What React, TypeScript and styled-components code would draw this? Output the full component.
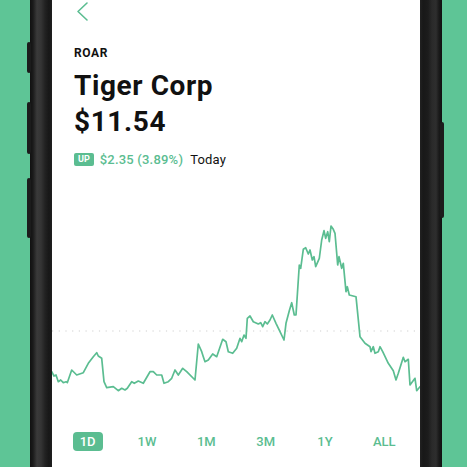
import React from "react";
import styled, { createGlobalStyle } from "styled-components";

const GREEN_BG = "#5ec596";
const GREEN = "#5bbd91";

const Global = createGlobalStyle`
  html, body { margin: 0; padding: 0; background: ${GREEN_BG}; }
  body { font-family: Roboto, "Liberation Sans", sans-serif; }
`;

const Page = styled.div`
  width: 467px;
  height: 467px;
  overflow: hidden;
  background: ${GREEN_BG};
  padding-left: 30px;
  box-sizing: border-box;
`;

const Phone = styled.div`
  position: relative;
  width: 412px;
  height: 467px;
  display: flex;
`;

const Bezel = styled.div<{ $side: "left" | "right" }>`
  width: 22px;
  flex: none;
  background: ${(p) =>
    p.$side === "left"
      ? "linear-gradient(to right, #111 0px, #1b1b1b 3px, #3a3a3a 7px, #343434 11px, #222 15px, #171717 19px, #202020 22px)"
      : "linear-gradient(to left, #111 0px, #1a1a1a 3px, #2e2e2e 6px, #2a2a2a 10px, #1c1c1c 14px, #181818 19px, #222 22px)"};
`;

const SideButton = styled.div<{ $side: "left" | "right"; $top: number; $h: number }>`
  position: absolute;
  ${(p) => (p.$side === "left" ? "left: -3px;" : "right: -2px;")}
  top: ${(p) => p.$top}px;
  height: ${(p) => p.$h}px;
  width: 4px;
  border-radius: 2px;
  background: #1c1c1c;
`;

const Screen = styled.div`
  flex: 1;
  background: #fff;
  display: flex;
  flex-direction: column;
  color: #111;
`;

const Content = styled.div`
  padding-left: 22px;
  display: flex;
  flex-direction: column;
  align-items: flex-start;
`;

const Back = styled.svg`
  display: block;
  margin-top: 1px;
`;

const Symbol = styled.div`
  margin-top: 23px;
  font-size: 12px;
  line-height: 16px;
  font-weight: 700;
  letter-spacing: 0.6px;
`;

const Title = styled.div`
  margin-top: 7px;
  font-size: 28px;
  line-height: 36px;
  font-weight: 700;
  letter-spacing: 0.6px;
`;

const ChangeRow = styled.div`
  margin-top: 13px;
  display: flex;
  align-items: center;
  height: 13px;
  font-size: 13px;
  line-height: 13px;
`;

const Badge = styled.span`
  background: ${GREEN};
  color: #fff;
  font-size: 9px;
  font-weight: 700;
  line-height: 13px;
  height: 13px;
  padding: 0 4px;
  border-radius: 2px;
  margin-right: 6px;
`;

const Change = styled.span`
  color: ${GREEN};
  font-weight: 500;
  letter-spacing: 0.2px;
  margin-right: 7px;
`;

const Period = styled.span`
  color: #111;
  letter-spacing: 0.2px;
`;

const Chart = styled.svg`
  display: block;
  margin-top: 34px;
`;

const TabBar = styled.div`
  margin-top: 32px;
  display: flex;
  padding: 0 6px;
`;

const Tab = styled.div`
  flex: 1;
  display: flex;
  justify-content: center;
`;

const TabLabel = styled.span<{ $active?: boolean }>`
  font-size: 13px;
  font-weight: 500;
  height: 19px;
  line-height: 19px;
  padding: 0 7px;
  border-radius: 4px;
  color: ${(p) => (p.$active ? "#fff" : GREEN)};
  background: ${(p) => (p.$active ? GREEN : "transparent")};
`;

const pts: [number, number][] = [
  [51.7, 371.7], [54, 376], [56, 375], [58.3, 381.7], [60.7, 380], [63.3, 382.7], [66, 381.7], [67.3, 382.7],
  [71.7, 370], [76.7, 375], [83.3, 372.7], [88.3, 363.3], [93.3, 356.7], [96.7, 352.7], [98.3, 356], [101.7, 358.3],
  [104, 381.7], [106.7, 387.7], [113.3, 386.7], [118.3, 390.7], [121.7, 388.3], [125, 390], [127.3, 388.3],
  [131.7, 381.7], [134.3, 383.3], [138.3, 381], [143.3, 383.3], [150, 371.7], [153.3, 371.7], [156.7, 375],
  [161.7, 375], [164, 383.3], [168.3, 381.7], [171.7, 378.3], [175, 370], [178.3, 375], [182.7, 368.3],
  [186.7, 371.7], [195, 380], [198.3, 344], [201.7, 351.7], [203.3, 356.7], [205, 361.7], [208.3, 360],
  [212.7, 354], [216.7, 356.7], [222.7, 339.3], [226, 341.7], [228.3, 351.7], [232.7, 353.3], [236.7, 348.3],
  [240, 338.3], [241.7, 341.7], [244, 335], [246, 338.3], [247.3, 318.3], [250, 316], [253.3, 321.7],
  [258.3, 324], [260.7, 322.7], [262.7, 326.7], [265, 321.7], [267.3, 324], [270, 320], [272.3, 315],
  [276, 323.3], [280, 331.7], [284, 340], [286, 323.3], [289.3, 310.7], [291.7, 302.7], [294.3, 315],
  [296, 315], [299.3, 265], [300.7, 268.3], [303.3, 249.3], [305.7, 247.7], [308.3, 254], [310, 250],
  [312.3, 260], [314, 256.7], [315.7, 266.7], [319.3, 258.3], [321.7, 240], [324, 230.7], [325.7, 238.3],
  [327.7, 231.7], [329.3, 241.7], [331, 226], [333.3, 229.3], [335, 233.3], [337.7, 265], [339, 256.7],
  [341.7, 268.3], [343.3, 263.3], [346, 291.7], [347.3, 286.7], [349.3, 295], [356, 296.7], [360, 336.7],
  [365, 343.3], [370, 346.7], [371, 351.7], [373.3, 346.7], [375, 353.3], [378.3, 351.7], [380, 346.7],
  [382.7, 351.7], [388.3, 363.3], [393.3, 370.7], [396, 380], [398.3, 373.3], [403.3, 357.3], [405, 361.7],
  [408.3, 359.3], [410, 385], [415, 378.3], [416.7, 390.7], [420, 386.7],
];

const linePath = "M" + pts.map(([x, y]) => `${x},${y}`).join(" L");

const tabs = ["1D", "1W", "1M", "3M", "1Y", "ALL"];

export default function App() {
  return (
    <Page>
      <Global />
      <Phone>
        <Bezel $side="left" />
        <Screen>
          <Content>
            <Back width="16" height="21" viewBox="0 0 16 21">
              <polyline points="13,2 4,10.5 13,19" fill="none" stroke={GREEN} strokeWidth="1.6" strokeLinecap="round" strokeLinejoin="round" />
            </Back>
            <Symbol>ROAR</Symbol>
            <Title>
              Tiger Corp
              <br />
              $11.54
            </Title>
            <ChangeRow>
              <Badge>UP</Badge>
              <Change>$2.35 (3.89%)</Change>
              <Period>Today</Period>
            </ChangeRow>
          </Content>
          <Chart width="368" height="200" viewBox="52 200 368 200">
            <line x1="52" y1="331" x2="420" y2="331" stroke="#cfcfcf" strokeWidth="1.2" strokeDasharray="1.2 5.5" />
            <path d={linePath} fill="none" stroke={GREEN} strokeWidth="1.7" strokeLinejoin="round" strokeLinecap="round" />
          </Chart>
          <TabBar>
            {tabs.map((t, i) => (
              <Tab key={t}>
                <TabLabel $active={i === 0}>{t}</TabLabel>
              </Tab>
            ))}
          </TabBar>
        </Screen>
        <Bezel $side="right" />
        <SideButton $side="left" $top={42} $h={31} />
        <SideButton $side="left" $top={102} $h={52} />
        <SideButton $side="left" $top={178} $h={60} />
        <SideButton $side="right" $top={122} $h={96} />
      </Phone>
    </Page>
  );
}
